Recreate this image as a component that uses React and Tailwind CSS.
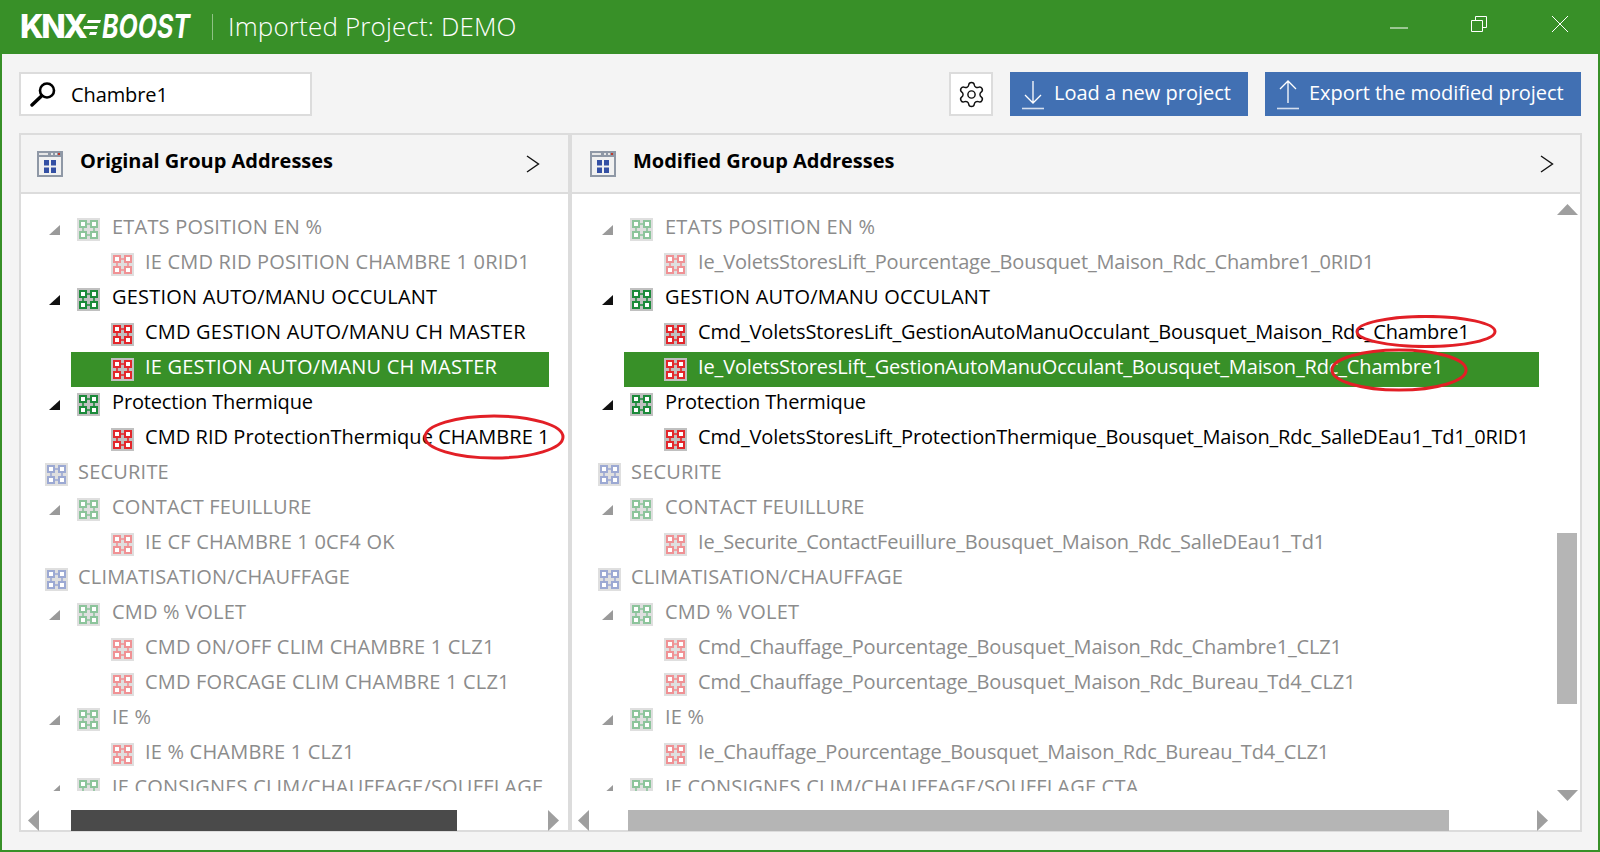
import React from 'react';
import { Settings } from 'lucide-react';

const font = { fontFamily: '"Open Sans", sans-serif' };

const COLORS = {
  green: { line: '#1b8a3a', bg: '#c0c0c0' },
  red: { line: '#e3262b', bg: '#c0c0c0' },
  blue: { line: '#3c55a8', bg: '#c0c0c0' },
};

const NodeIcon = ({ color, dim }) => {
  const c = COLORS[color];
  return (
    <svg width="23" height="23" viewBox="0 0 23 23" className={dim ? 'shrink-0 opacity-50' : 'shrink-0'}>
      <rect width="23" height="23" fill={c.bg} />
      <path d="M9 6H14M9 17H14M6 9V14M17 9V14" stroke={c.line} strokeWidth="1.6" />
      {[[3, 3], [14, 3], [3, 14], [14, 14]].map(([x, y]) => (
        <rect key={`${x}-${y}`} x={x} y={y} width="6" height="6" fill="#fff" stroke={c.line} strokeWidth="2" />
      ))}
    </svg>
  );
};

const Arrow = ({ dim }) => (
  <svg width="11" height="10" viewBox="0 0 11 10" className="mr-[5px] shrink-0">
    <path d="M11 0V10H0Z" fill={dim ? '#9a9a9a' : '#111'} />
  </svg>
);

// caps are wider in the original font than in Open Sans, so spacing depends on the text
const spacing = (text) => {
  if (text === text.toUpperCase()) return 'tracking-[0.2px]';
  if (text.includes('CHAMBRE')) return 'tracking-[0.05px]';
  return 'tracking-[-0.15px]';
};

const Row = ({ level, text, dim, selected }) => {
  const color = selected ? 'text-white' : dim ? 'text-[#8c8c8c]' : 'text-black';
  const label = `-mt-[5px] shrink-0 whitespace-nowrap ${spacing(text)} ${color}`;
  if (level === 0) {
    return (
      <div className="flex h-[35px] items-center gap-[10px] pl-[24px]">
        <NodeIcon color="blue" dim={dim} />
        <span className={label}>{text}</span>
      </div>
    );
  }
  if (level === 1) {
    return (
      <div className="flex h-[35px] items-center gap-[12px] pl-[28px]">
        <Arrow dim={dim} />
        <NodeIcon color="green" dim={dim} />
        <span className={label}>{text}</span>
      </div>
    );
  }
  return (
    <div className={`ml-[50px] flex h-[35px] items-center gap-[11px] pl-[40px] ${selected ? 'bg-[#389028]' : ''}`}>
      <NodeIcon color="red" dim={dim} />
      <span className={label}>{text}</span>
    </div>
  );
};

const leftRows = [
  [1, 'ETATS POSITION EN %', true],
  [2, 'IE CMD RID POSITION CHAMBRE 1 0RID1', true],
  [1, 'GESTION AUTO/MANU OCCULANT'],
  [2, 'CMD GESTION AUTO/MANU CH MASTER'],
  [2, 'IE GESTION AUTO/MANU CH MASTER', false, true],
  [1, 'Protection Thermique'],
  [2, 'CMD RID ProtectionThermique CHAMBRE 1'],
  [0, 'SECURITE', true],
  [1, 'CONTACT FEUILLURE', true],
  [2, 'IE CF CHAMBRE 1 0CF4 OK', true],
  [0, 'CLIMATISATION/CHAUFFAGE', true],
  [1, 'CMD % VOLET', true],
  [2, 'CMD ON/OFF CLIM CHAMBRE 1 CLZ1', true],
  [2, 'CMD FORCAGE CLIM CHAMBRE 1 CLZ1', true],
  [1, 'IE %', true],
  [2, 'IE % CHAMBRE 1 CLZ1', true],
  [1, 'IE CONSIGNES CLIM/CHAUFFAGE/SOUFFLAGE CTA', true],
];

const rightRows = [
  [1, 'ETATS POSITION EN %', true],
  [2, 'Ie_VoletsStoresLift_Pourcentage_Bousquet_Maison_Rdc_Chambre1_0RID1', true],
  [1, 'GESTION AUTO/MANU OCCULANT'],
  [2, 'Cmd_VoletsStoresLift_GestionAutoManuOcculant_Bousquet_Maison_Rdc_Chambre1'],
  [2, 'Ie_VoletsStoresLift_GestionAutoManuOcculant_Bousquet_Maison_Rdc_Chambre1', false, true],
  [1, 'Protection Thermique'],
  [2, 'Cmd_VoletsStoresLift_ProtectionThermique_Bousquet_Maison_Rdc_SalleDEau1_Td1_0RID1'],
  [0, 'SECURITE', true],
  [1, 'CONTACT FEUILLURE', true],
  [2, 'Ie_Securite_ContactFeuillure_Bousquet_Maison_Rdc_SalleDEau1_Td1', true],
  [0, 'CLIMATISATION/CHAUFFAGE', true],
  [1, 'CMD % VOLET', true],
  [2, 'Cmd_Chauffage_Pourcentage_Bousquet_Maison_Rdc_Chambre1_CLZ1', true],
  [2, 'Cmd_Chauffage_Pourcentage_Bousquet_Maison_Rdc_Bureau_Td4_CLZ1', true],
  [1, 'IE %', true],
  [2, 'Ie_Chauffage_Pourcentage_Bousquet_Maison_Rdc_Bureau_Td4_CLZ1', true],
  [1, 'IE CONSIGNES CLIM/CHAUFFAGE/SOUFFLAGE CTA', true],
];

const Tree = ({ rows, className }) => (
  <div className={`h-[597px] overflow-hidden pt-[18px] text-[20px] ${className}`}>
    {rows.map(([level, text, dim, selected]) => (
      <Row key={text} level={level} text={text} dim={dim} selected={selected} />
    ))}
  </div>
);

const HArrow = ({ right }) => (
  <svg width="11" height="21" viewBox="0 0 11 21" className="shrink-0">
    <path d={right ? 'M0 0L11 10.5L0 21Z' : 'M11 0L0 10.5L11 21Z'} fill="#9f9f9f" />
  </svg>
);

const PanelHeader = ({ title, iconClass, chevronClass }) => (
  <div className="flex h-[59px] items-center border-b-2 border-[#dcdcdc] bg-[#f4f4f4]">
    <svg width="26" height="26" viewBox="0 0 26 26" className={`shrink-0 ${iconClass}`}>
      <rect width="26" height="26" fill="#8f98a6" />
      <rect x="2" y="6" width="22" height="18" fill="#f1f1f1" />
      <rect x="2" y="2" width="9" height="2" fill="#e6e6e6" />
      <rect x="14" y="2" width="2" height="2" fill="#e6e6e6" />
      <rect x="18" y="2" width="2" height="2" fill="#e6e6e6" />
      <rect x="21" y="2" width="2" height="2" fill="#c0392b" />
      <rect x="7" y="9" width="5" height="5.5" fill="#3450a4" />
      <rect x="14" y="9" width="5" height="5.5" fill="#3450a4" />
      <rect x="7" y="16.5" width="5" height="5.5" fill="#3450a4" />
      <rect x="14" y="16.5" width="5" height="5.5" fill="#3450a4" />
    </svg>
    <span className="ml-[17px] -mt-[5px] text-[20px] font-bold tracking-[-0.03px] text-black">{title}</span>
    <svg width="14" height="18" viewBox="0 0 14 18" className={`ml-auto shrink-0 ${chevronClass}`}>
      <path d="M1 1L12.5 9L1 17" fill="none" stroke="#111" strokeWidth="1.4" />
    </svg>
  </div>
);

const Ellipse = ({ className }) => (
  <svg viewBox="0 0 142 46" preserveAspectRatio="none" className={`pointer-events-none absolute ${className}`}>
    <ellipse cx="71" cy="23" rx="69" ry="21" fill="none" stroke="#e21f26" strokeWidth="3" vectorEffect="non-scaling-stroke" />
  </svg>
);

const UpDownIcon = ({ up }) => (
  <svg width="24" height="32" viewBox="0 0 24 32" className="shrink-0">
    <path
      d={up ? 'M12 25V3M4 11L12 3L20 11' : 'M12 3V25M4 17L12 25L20 17'}
      fill="none"
      stroke="#fff"
      strokeWidth="1.3"
    />
    <path d="M1 30.5H23" stroke="#d5dfef" strokeWidth="1.6" />
  </svg>
);

export default function App() {
  return (
    <div className="relative flex h-[852px] w-[1600px] flex-col overflow-hidden border-x-2 border-b-2 border-[#389028] bg-[#f4f4f4]" style={font}>
      <header className="-mx-[2px] flex h-[54px] shrink-0 items-center bg-[#389028] text-white">
        <div className="ml-[20px] flex w-[171px] items-center [font-family:Inter,sans-serif]">
          <span className="w-[62px] shrink-0 text-[32px] font-extrabold leading-none tracking-[-2.4px]">KNX</span>
          <svg width="20" height="24" viewBox="0 0 20 24" className="shrink-0">
            <path d="M6 5H19L18 8H5ZM2 11H16L15 14H1ZM8 17H15L14 20H7Z" fill="#fff" />
          </svg>
          <span className="w-[85px] shrink-0 origin-left scale-x-[0.78] text-[32px] font-bold italic leading-none">BOOST</span>
        </div>
        <div className="ml-[21px] h-[26px] w-px bg-[#8fc285]" />
        <h1 className="ml-[15px] -mt-[1px] text-[26px] font-light tracking-[0.15px]">Imported Project: DEMO</h1>
        <div className="ml-auto flex items-center">
          <svg width="20" height="20" viewBox="0 0 20 20" className="mb-[8px] mr-[61px]">
            <path d="M1 15H19" stroke="#fff" strokeWidth="1" />
          </svg>
          <svg width="18" height="18" viewBox="0 0 18 18" className="mb-[6px] mr-[63px]">
            <path d="M1.5 5.5H12.5V16.5H1.5ZM5.5 5.5V1.5H16.5V12.5H12.5" fill="none" stroke="#fff" strokeWidth="1" />
          </svg>
          <svg width="18" height="18" viewBox="0 0 18 18" className="mb-[6px] mr-[31px]">
            <path d="M1 1L17 17M17 1L1 17" stroke="#fff" strokeWidth="1" />
          </svg>
        </div>
      </header>

      <div className="flex shrink-0 pl-[17px] pr-[17px] pt-[18px]">
        <div className="flex h-[44px] w-[293px] items-center border-2 border-[#dcdcdc] bg-white pl-[9px]">
          <svg width="28" height="26" viewBox="0 0 28 26" className="shrink-0">
            <circle cx="17" cy="9.5" r="7" fill="none" stroke="#000" strokeWidth="2.6" />
            <path d="M11.5 15L2 24" stroke="#000" strokeWidth="3.4" strokeLinecap="round" />
          </svg>
          <span className="ml-[13px] mt-[1px] text-[20px] tracking-[-0.1px] text-black">Chambre1</span>
        </div>
        <div className="ml-auto flex h-[44px] w-[44px] items-center justify-center border-2 border-[#dcdcdc] bg-white">
          <Settings size={29} strokeWidth={1.2} color="#111" />
        </div>
        <div className="ml-[17px] flex h-[44px] w-[238px] items-center bg-[#4170b3] pl-[11px] text-white">
          <UpDownIcon />
          <span className="ml-[9px] -mt-[2px] text-[20px] tracking-[0px]">Load a new project</span>
        </div>
        <div className="ml-[17px] flex h-[44px] w-[316px] items-center bg-[#4170b3] pl-[11px] text-white">
          <UpDownIcon up />
          <span className="ml-[9px] -mt-[2px] text-[20px] tracking-[-0.05px]">Export the modified project</span>
        </div>
      </div>

      <div className="mt-[17px] flex shrink-0 pl-[17px]">
        <section className="h-[699px] w-[549px] shrink-0 border-2 border-r-0 border-[#dcdcdc] bg-white">
          <PanelHeader title="Original Group Addresses" iconClass="ml-[16px]" chevronClass="mr-[28px]" />
          <Tree rows={leftRows} className="w-[528px]" />
          <div className="mt-[19px] flex h-[21px] items-center pl-[7px]">
            <HArrow />
            <div className="ml-[32px] h-[21px] w-[386px] bg-[#4a4a4a]" />
            <div className="ml-[91px]"><HArrow right /></div>
          </div>
        </section>
        <div className="h-[699px] w-[4px] shrink-0 bg-[#dcdcdc]" />
        <section className="h-[699px] w-[1010px] shrink-0 border-2 border-l-0 border-[#dcdcdc] bg-white">
          <PanelHeader title="Modified Group Addresses" iconClass="ml-[18px]" chevronClass="mr-[26px]" />
          <div className="flex">
            <Tree rows={rightRows} className="w-[967px] pl-[2px]" />
            <div className="ml-[18px] flex h-[607px] w-[21px] flex-col pt-[10px]">
              <svg width="21" height="11" viewBox="0 0 21 11" className="shrink-0">
                <path d="M10.5 0L21 11H0Z" fill="#9f9f9f" />
              </svg>
              <div className="mt-[318px] h-[171px] w-[20px] bg-[#b5b5b5]" />
              <svg width="21" height="11" viewBox="0 0 21 11" className="mt-[86px] shrink-0">
                <path d="M0 0H21L10.5 11Z" fill="#9f9f9f" />
              </svg>
            </div>
          </div>
          <div className="mt-[9px] flex h-[21px] items-center pl-[6px]">
            <HArrow />
            <div className="ml-[39px] h-[21px] w-[821px] bg-[#b5b5b5]" />
            <div className="ml-[88px]"><HArrow right /></div>
          </div>
        </section>
      </div>

      <Ellipse className="left-[421px] top-[414px] h-[46px] w-[142px]" />
      <Ellipse className="left-[1353px] top-[315px] h-[33px] w-[142px]" />
      <Ellipse className="left-[1328px] top-[348px] h-[44px] w-[138px]" />
    </div>
  );
}
